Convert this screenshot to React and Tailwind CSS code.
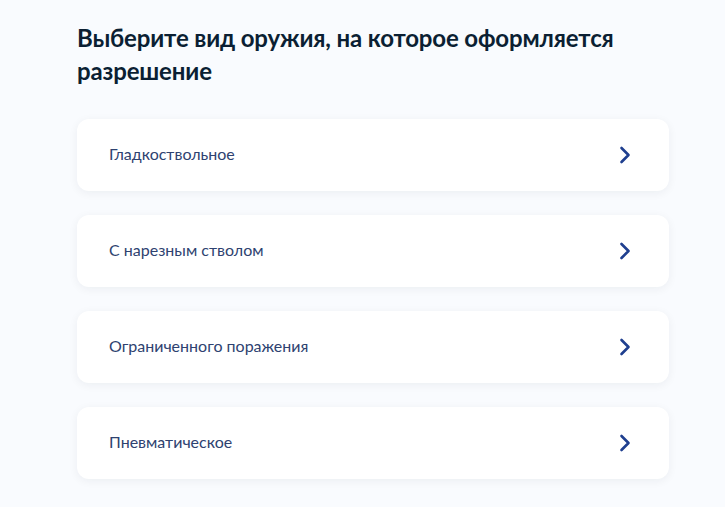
const items = [
  'Гладкоствольное',
  'С нарезным стволом',
  'Ограниченного поражения',
  'Пневматическое',
];

const Chevron = () => (
  <svg width="12" height="18" viewBox="0 0 12 18" fill="none">
    <path d="M2.5 2L9.5 9L2.5 16" stroke="#1f3f8f" strokeWidth="2.6" strokeLinecap="round" strokeLinejoin="round" />
  </svg>
);

export default function App() {
  return (
    <div className="min-h-[507px] bg-[#f9fbfe] font-['Lato',sans-serif]">
      <div className="w-[592px] ml-[77px] pt-[21px]">
        <h1 className="text-[24px] leading-[33px] font-bold text-[#0b1f33] tracking-[-0.15px]">
          Выберите вид оружия, на которое оформляется разрешение
        </h1>
        <div className="mt-[32px] flex flex-col gap-[24px]">
          {items.map((t) => (
            <div
              key={t}
              className="h-[72px] bg-white rounded-[12px] shadow-[0_2px_10px_rgba(11,31,51,0.06)] flex items-center justify-between pl-[32px] pr-[38px]"
            >
              <span className="text-[16px] leading-[20px] pb-[2px] text-[#2e4270]">{t}</span>
              <Chevron />
            </div>
          ))}
        </div>
      </div>
    </div>
  );
}
